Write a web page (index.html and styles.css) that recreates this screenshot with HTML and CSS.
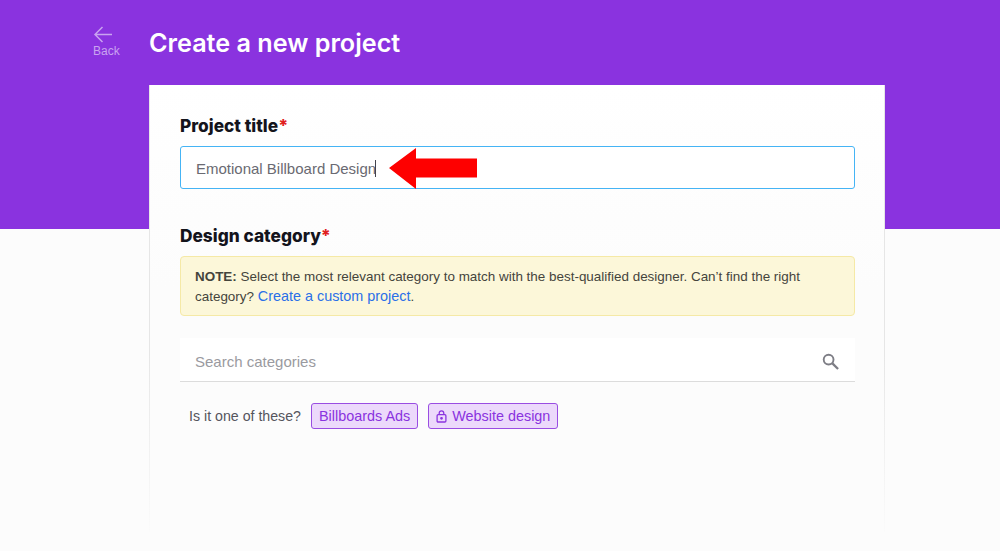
FILE: index.html
```html
<!DOCTYPE html>
<html lang="en">
<head>
<meta charset="utf-8">
<title>Create a new project</title>
<link rel="stylesheet" href="styles.css">
</head>
<body>
<header class="hero">
  <a class="back">
    <svg class="back-icon" width="20" height="17" viewBox="0 0 20 17" fill="none" stroke="currentColor" stroke-width="1.5"><path d="M19 8.500H2M9.500 1L2 8.500l7.500 7.500"/></svg>
    <span>Back</span>
  </a>
  <h1 class="title">Create a new project</h1>
</header>
<main class="card">
  <h2 class="label">Project title<span class="req">*</span></h2>
  <div class="field">
    <span class="value">Emotional Billboard Design</span><span class="caret"></span>
    <svg class="arrow" width="88" height="41" viewBox="0 0 88 41"><path d="M0 20L27 0V10.500H88V29.500H27V41Z" fill="#fe0000"/></svg>
  </div>
  <h2 class="label label-category">Design category<span class="req">*</span></h2>
  <div class="note"><b>NOTE:</b> Select the most relevant category to match with the best-qualified designer. Can’t find the right category? <a class="link">Create a custom project</a>.</div>
  <div class="search">
    <span class="placeholder">Search categories</span>
    <svg class="search-icon" width="17" height="17" viewBox="0 0 18 18" fill="none" stroke="#7d7d85" stroke-width="2"><circle cx="7" cy="7" r="5.200"/><path d="M11 11l6 6" stroke-width="2.400"/></svg>
  </div>
  <div class="suggest">
    <span>Is it one of these?</span>
    <a class="chip">Billboards Ads</a>
    <a class="chip">
      <svg width="11" height="13" viewBox="0 0 12 14" fill="none" stroke="currentColor" stroke-width="1.400"><rect x="1.200" y="5" width="9.600" height="8" rx="1.200"/><path d="M3.500 5V3.400a2.500 2.500 0 0 1 5 0V5"/><circle cx="6" cy="9" r=".8" fill="currentColor"/></svg>
      Website design
    </a>
  </div>
</main>
</body>
</html>
```
FILE: styles.css
```css
* { box-sizing: border-box; }
html, body { margin: 0; height: 100%; }
body {
  background: #fcfcfc;
  font-family: "Liberation Sans", sans-serif;
  color: #44444c;
  overflow: hidden;
}
.hero {
  height: 229px;
  background: #8a33df;
  display: flex;
  align-items: flex-start;
  padding: 26px 0 0 93px;
}
.back {
  width: 56px;
  display: flex;
  flex-direction: column;
  align-items: flex-start;
  color: #c9a3f0;
  font-size: 12px;
  line-height: 14px;
}
.back-icon { margin-bottom: 1px; }
.title {
  margin: -1px 0 0;
  color: #fff;
  font-family: "Inter", sans-serif;
  font-size: 25.2px;
  line-height: 36px;
  font-weight: 600;
}
.card {
  width: 736px;
  height: 447px;
  margin: -144px 0 0 149px;
  padding: 30px 29px 0 30px;
  background: linear-gradient(#fff, #fcfcfc 45%);
  border-left: 1px solid;
  border-right: 1px solid;
  border-image: linear-gradient(#e6e6e6 60%, #fbfbfb) 1;
}
.label {
  margin: 0;
  font-family: "Inter", sans-serif;
  font-size: 17.3px;
  line-height: 22px;
  font-weight: 800;
  color: #14141c;
}
.req { color: #e02020; }
.field {
  position: relative;
  height: 43px;
  margin-top: 9px;
  display: flex;
  align-items: center;
  padding: 1px 0 0 15px;
  background: #fff;
  border: 1.5px solid #45b4f5;
  border-radius: 3px;
  font-size: 15px;
  color: #6a6a72;
}
.caret { width: 1px; height: 17px; margin-left: -1px; background: #44444c; }
.arrow { position: absolute; left: 208px; top: 1px; }
.label-category { margin-top: 36px; }
.note {
  margin-top: 9px;
  height: 60px;
  padding: 10px 14px 0;
  background: #fcf7d9;
  border: 1px solid #f5e9a6;
  border-radius: 4px;
  font-size: 13.45px;
  line-height: 20px;
  color: #44443c;
}
.link { color: #2a6fe8; font-size: 14.4px; line-height: 1; }
.search {
  height: 44px;
  margin-top: 22px;
  padding: 3px 16px 0 15px;
  display: flex;
  align-items: center;
  justify-content: space-between;
  background: #fff;
  border-bottom: 1px solid #dcdcdc;
  font-size: 15px;
  color: #9a9aa0;
}
.suggest {
  margin-top: 21px;
  padding-left: 9px;
  display: flex;
  align-items: center;
  gap: 10px;
  font-size: 14.2px;
  color: #55555d;
}
.chip {
  height: 26px;
  padding: 0 7px;
  display: flex;
  align-items: center;
  gap: 5px;
  font-size: 14.4px;
  background: #ecd9fb;
  border: 1px solid #9a4de2;
  border-radius: 3px;
  color: #8a33df;
}
```
